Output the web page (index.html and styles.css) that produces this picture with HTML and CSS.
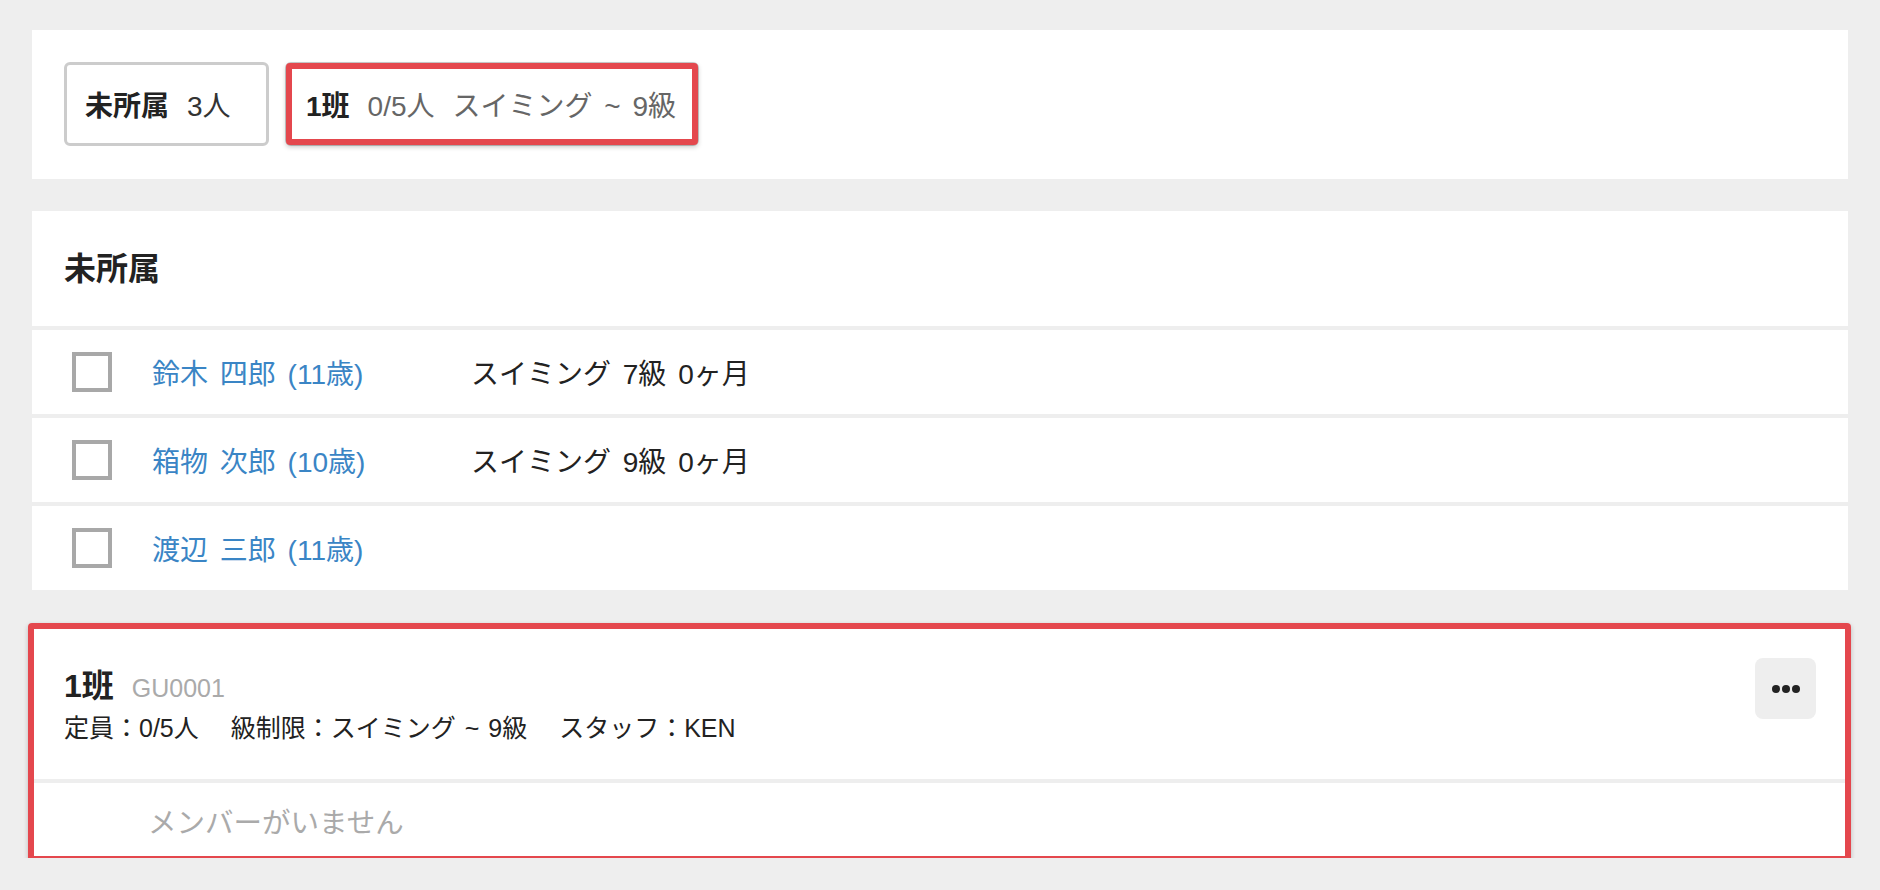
FILE: index.html
```html
<!DOCTYPE html>
<html lang="ja">
<head>
  <meta charset="UTF-8">
  <meta name="viewport" content="width=device-width, initial-scale=1.0">
  <title>班分け</title>
  <link rel="stylesheet" href="styles.css">
</head>
<body>
  <!-- Group tabs -->
  <section class="panel tabs">
    <div class="chip chip-wide"><b>未所属</b><span>3人</span></div>
    <div class="chip marked"><b>1班</b><span>0/5人</span><span>スイミング ~ 9級</span></div>
  </section>

  <!-- Unassigned members -->
  <section class="group">
    <h2 class="group-title">未所属</h2>
    <div class="member-row">
      <span class="check"></span>
      <a class="name">鈴木 四郎 (11歳)</a>
      <span class="level">スイミング 7級 0ヶ月</span>
    </div>
    <div class="member-row">
      <span class="check"></span>
      <a class="name">箱物 次郎 (10歳)</a>
      <span class="level">スイミング 9級 0ヶ月</span>
    </div>
    <div class="member-row">
      <span class="check"></span>
      <a class="name">渡辺 三郎 (11歳)</a>
    </div>
  </section>

  <!-- Group card -->
  <section class="card marked marked-card">
    <div class="card-head">
      <div class="card-info">
        <div class="card-title"><b>1班</b><span class="code">GU0001</span></div>
        <div class="card-meta">
          <span>定員：0/5人</span>
          <span>級制限：スイミング ~ 9級</span>
          <span>スタッフ：KEN</span>
        </div>
      </div>
      <button class="more-btn"><i class="dot"></i><i class="dot"></i><i class="dot"></i></button>
    </div>
    <div class="empty">メンバーがいません</div>
  </section>
</body>
</html>
```

FILE: styles.css
```css
body {
  margin: 0;
  padding: 30px 32px 0;
  background-color: #eeeeee;
  font-family: "Liberation Sans", "Noto Sans CJK JP", sans-serif;
  color: #222;
  word-spacing: 4px;
}
.panel {
  background: #fff;
  padding: 32px 32px 33px;
  display: flex;
  gap: 16px;
}
.chip {
  display: flex;
  align-items: center;
  box-sizing: border-box;
  height: 84px;
  padding: 0 20px 0 18px;
  border: 3px solid #cccccc;
  border-radius: 6px;
  font-size: 28px;
  color: #666;
}
.chip b {
  color: #222;
}
.chip span {
  margin-left: 18px;
}
.chip-wide {
  min-width: 205px;
}
.chip-wide span {
  color: #333;
}
.marked {
  position: relative;
}
.marked::after {
  content: "";
  position: absolute;
  inset: -2px;
  border: 6px solid #e4474d;
  border-radius: 4px;
  box-shadow: 0 2px 5px rgba(0, 0, 0, 0.22);
  pointer-events: none;
}
.group {
  margin-top: 32px;
  display: flex;
  flex-direction: column;
  gap: 4px;
}
.group-title {
  margin: 0;
  height: 115px;
  box-sizing: border-box;
  padding: 0 32px 6px;
  display: flex;
  align-items: center;
  background: #fff;
  font-size: 32px;
  font-weight: bold;
}
.member-row {
  height: 84px;
  padding-left: 40px;
  display: flex;
  align-items: center;
  background: #fff;
  font-size: 28px;
}
.check {
  width: 40px;
  height: 40px;
  box-sizing: border-box;
  border: 4px solid #a8a8a8;
  margin-right: 40px;
}
.name {
  width: 319px;
  color: #3a85c5;
}
.card {
  margin-top: 37px;
  background: #fff;
}
.marked-card::after {
  inset: -4px -3px -4px -4px;
}
.card-head {
  display: flex;
  justify-content: space-between;
  align-items: flex-start;
  padding: 32px;
  border-bottom: 4px solid #eeeeee;
}
.card-title {
  display: flex;
  align-items: baseline;
  height: 50px;
  line-height: 54px;
  font-size: 32px;
}
.code {
  margin-left: 18px;
  font-size: 25px;
  color: #aaa;
}
.card-meta {
  display: flex;
  gap: 32px;
  font-size: 25px;
  line-height: 38px;
  word-spacing: 2px;
}
.more-btn {
  width: 61px;
  height: 61px;
  margin-top: -1px;
  border: none;
  border-radius: 8px;
  background: #eeeeee;
  display: flex;
  align-items: center;
  justify-content: center;
  gap: 2px;
  padding: 0;
}
.dot {
  width: 8px;
  height: 8px;
  border-radius: 50%;
  background: #222;
}
.empty {
  height: 75px;
  padding-left: 116px;
  display: flex;
  align-items: center;
  font-size: 28.5px;
  color: #aaa;
  word-spacing: 0;
}
```
